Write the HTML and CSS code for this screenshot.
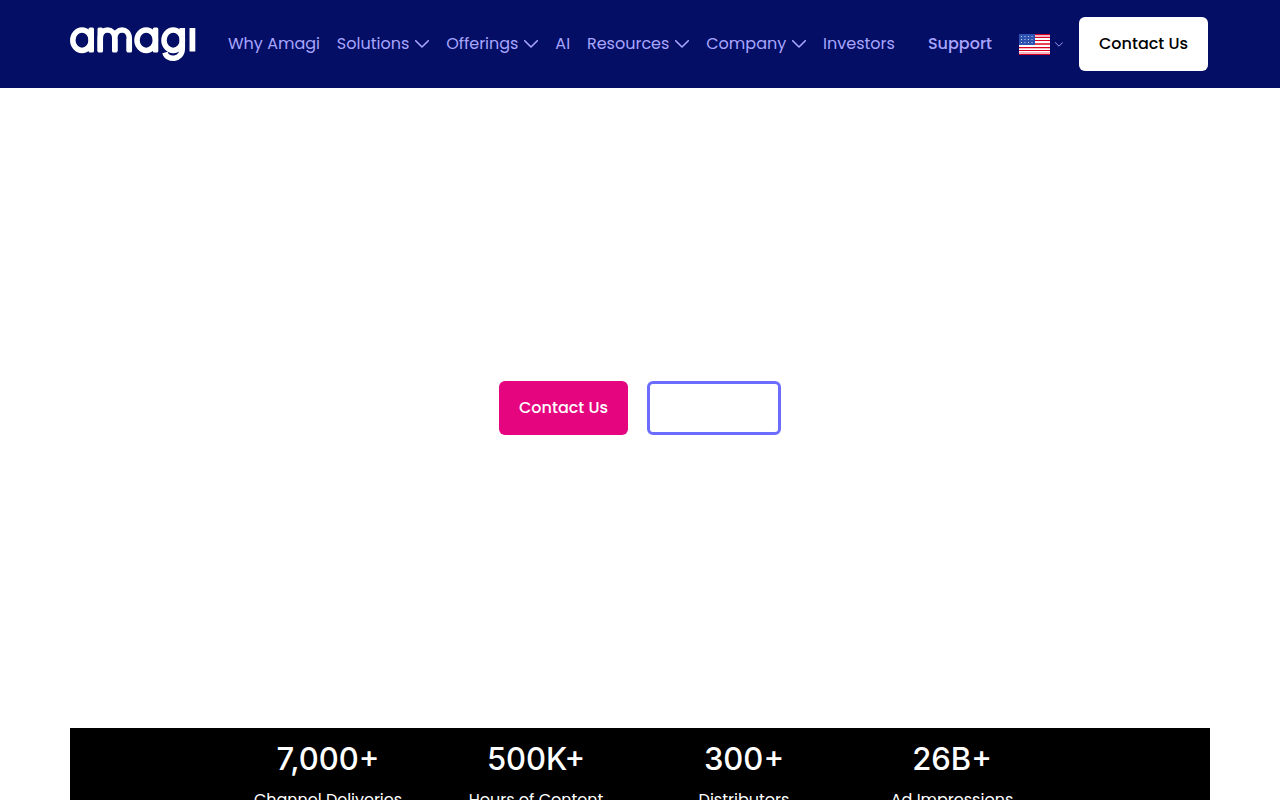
FILE: index.html
```html
<!DOCTYPE html>
<html lang="en">
<head>
<meta charset="utf-8">
<meta name="viewport" content="width=device-width, initial-scale=1">
<title>Amagi</title>
<link rel="stylesheet" href="styles.css">
</head>
<body>
<header class="header">
  <a class="logo" href="#" aria-label="Amagi home">
    <svg width="126" height="36" viewBox="0 0 126 36" fill="none" stroke="#fff" stroke-width="5.500">
      <ellipse cx="12" cy="14.200" rx="9.200" ry="10.200"/>
      <ellipse cx="76.200" cy="14.200" rx="9.200" ry="10.200"/>
      <ellipse cx="103.200" cy="14.200" rx="9.200" ry="10.200"/>
      <path d="M30.300 25V12.500C30.300 1.200 44.800 1.200 44.800 12.500V25M44.800 12.500C44.800 1.200 59.300 1.200 59.300 12.500V25"/>
      <path d="M112.300 2V22.500C112.300 34.800 97 34.800 95 26.500"/>
      <g fill="#fff" stroke="none">
        <rect x="18.500" y="1.500" width="5.500" height="25" rx="1.500"/>
        <rect x="27.500" y="1.500" width="5.500" height="25" rx="1.500"/>
        <rect x="42" y="12" width="5.500" height="14.500" rx="1.500"/>
        <rect x="56.500" y="12" width="5.500" height="14.500" rx="1.500"/>
        <rect x="82.800" y="1.500" width="5.500" height="25" rx="1.500"/>
        <rect x="119.500" y="2" width="5.800" height="23.500" rx=".5"/>
      </g>
    </svg>
  </a>
  <nav class="nav" aria-label="Main">
    <a class="nav-link" href="#">Why Amagi</a>
    <button class="nav-link" type="button">Solutions <svg class="chevron" viewBox="0 0 14 8"><path d="M.7.7 7 7 13.300.7"/></svg></button>
    <button class="nav-link" type="button">Offerings <svg class="chevron" viewBox="0 0 14 8"><path d="M.7.7 7 7 13.300.7"/></svg></button>
    <a class="nav-link" href="#">AI</a>
    <button class="nav-link" type="button">Resources <svg class="chevron" viewBox="0 0 14 8"><path d="M.7.7 7 7 13.300.7"/></svg></button>
    <button class="nav-link" type="button">Company <svg class="chevron" viewBox="0 0 14 8"><path d="M.7.7 7 7 13.300.7"/></svg></button>
    <a class="nav-link" href="#">Investors</a>
  </nav>
  <div class="actions">
    <a class="support" href="#">Support</a>
    <button class="language" type="button" aria-label="Language">
      <svg width="31" height="21" viewBox="0 0 31 21">
        <path fill="#fff" d="M0 0h31v21H0z"/>
        <path fill="#f7b5c0" d="M0 1h31v3H0zM0 14h31v1H0zM0 18h31v2H0z"/>
        <path fill="#e8415a" d="M0 9h31v2H0z"/>
        <path fill="#d80027" d="M0 0h31v1H0zM0 3h31v1H0zM0 6h31v1H0zM0 13h31v1H0zM0 16h31v1H0zM0 20h31v1H0z"/>
        <path fill="#2e52b2" d="M0 0h16v11H0z"/>
        <path fill="none" stroke="#c9d4f0" stroke-dasharray="1 2.500" d="M2 2.500h12M2 5.500h12M2 8.500h12"/>
      </svg>
      <svg class="chevron chevron-small" viewBox="0 0 14 8"><path d="M.7.7 7 7 13.300.7"/></svg>
    </button>
    <a class="button button-white" href="#">Contact Us</a>
  </div>
</header>
<main>
  <section class="hero">
    <a class="button button-pink" href="#">Contact Us</a>
    <a class="button button-outline" href="#" aria-label="Learn more"></a>
  </section>
  <section class="stats">
    <div class="stat"><strong class="stat-value">7,000+</strong><span>Channel Deliveries</span></div>
    <div class="stat"><strong class="stat-value">500K+</strong><span>Hours of Content</span></div>
    <div class="stat"><strong class="stat-value">300+</strong><span>Distributors</span></div>
    <div class="stat"><strong class="stat-value">26B+</strong><span>Ad Impressions</span></div>
  </section>
</main>
</body>
</html>
```
FILE: styles.css
```css
* { box-sizing: border-box; }
body {
  margin: 0;
  background: #fff;
  color: #fff;
  font: 16px/24px Poppins, Inter, sans-serif;
}
a { color: inherit; text-decoration: none; }
button { padding: 0; border: 0; background: none; color: inherit; font: inherit; cursor: pointer; }
.header {
  display: flex;
  align-items: center;
  min-height: 88px;
  padding: 0 72px 0 70px;
  background: #040e64;
  color: #a8a5ff;
}
.logo { display: flex; flex: none; }
.nav {
  display: flex;
  flex: 1;
  justify-content: space-between;
  margin: 0 33px 0 32px;
}
.nav-link { display: flex; align-items: center; gap: 6px; white-space: nowrap; }
.chevron {
  width: 14px;
  height: 8px;
  fill: none;
  stroke: currentColor;
  stroke-width: 1.6;
  stroke-linecap: round;
  stroke-linejoin: round;
}
.chevron-small { width: 8px; height: 5px; }
.actions { display: flex; align-items: center; }
.support { font-weight: 500; }
.language { display: flex; align-items: center; gap: 5px; margin: 0 16px 0 27px; }
.button {
  display: block;
  min-width: 129px;
  padding: 15px 18px;
  border-radius: 6px;
  font-weight: 500;
  text-align: center;
  white-space: nowrap;
}
.button-white { background: #fff; color: #000; }
.button-pink { background: #e5067f; }
.button-outline { min-width: 134px; border: 3px solid #6c6cff; }
.hero {
  display: flex;
  align-items: center;
  justify-content: center;
  gap: 19px;
  min-height: 640px;
}
.hero .button { min-height: 54px; }
.stats {
  display: grid;
  grid-template-columns: repeat(4, 208px);
  justify-content: center;
  margin: 0 70px;
  padding: 12px 0 16px;
  background: #000;
}
.stat { display: flex; flex-direction: column; gap: 10px; text-align: center; }
.stat-value { font: 500 31px/38px Inter, sans-serif; }
```
